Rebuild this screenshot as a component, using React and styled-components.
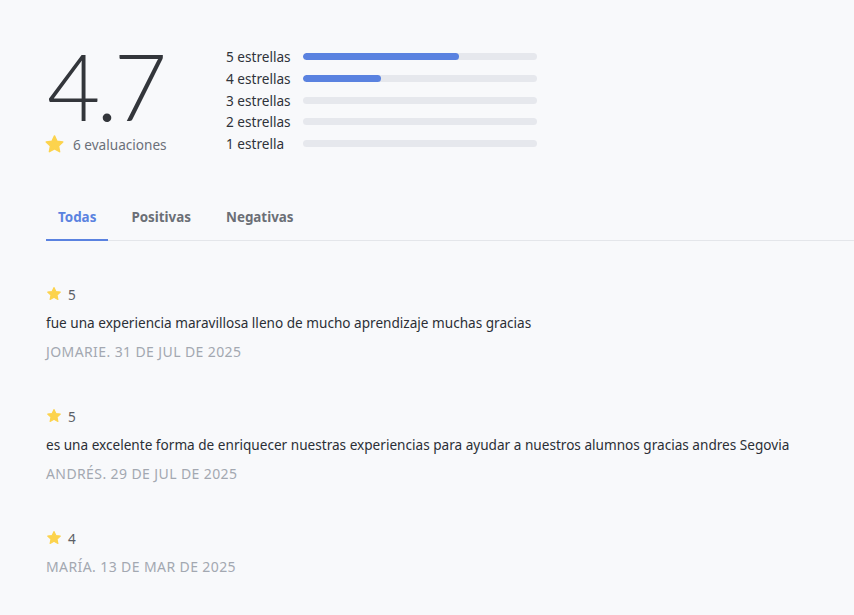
import styled, { createGlobalStyle } from "styled-components";
import { useState } from "react";

const GlobalStyle = createGlobalStyle`
body {
  margin: 0;
  background: #f8f9fb;
  font-family: 'Noto Sans', 'Lato', sans-serif;
  color: #2b2f36;
}
* { box-sizing: border-box; }
`

const distribucion = [
  { label: "5 estrellas", valor: 4 },
  { label: "4 estrellas", valor: 2 },
  { label: "3 estrellas", valor: 0 },
  { label: "2 estrellas", valor: 0 },
  { label: "1 estrella", valor: 0 },
]

const resenas = [
  { nota: 5, texto: "fue una experiencia maravillosa lleno de mucho aprendizaje muchas gracias", autor: "JOMARIE. 31 DE JUL DE 2025" },
  { nota: 5, texto: "es una excelente forma de enriquecer nuestras experiencias para ayudar a nuestros alumnos gracias andres Segovia", autor: "ANDRÉS. 29 DE JUL DE 2025" },
  { nota: 4, texto: "", autor: "MARÍA. 13 DE MAR DE 2025" },
]

function Estrella({ size }) {
  return (
    <svg width={size} height={size} viewBox="0 0 24 24" style={{ flexShrink: 0 }}>
      <path
        d="M12 2.2l2.9 6.1 6.6.8-4.9 4.6 1.3 6.6L12 17l-5.9 3.3 1.3-6.6-4.9-4.6 6.6-.8z"
        fill="#fcd34d"
        stroke="#fcd34d"
        strokeWidth="1.6"
        strokeLinejoin="round"
      />
    </svg>
  )
}

export default function App() {
  const [tab, setTab] = useState("Todas")
  const total = 6

  return (
    <Pagina>
      <GlobalStyle />
      <Resumen>
        <Promedio>
          <Numero>4.7</Numero>
          <Conteo>
            <Estrella size={21} />
            <span>6 evaluaciones</span>
          </Conteo>
        </Promedio>
        <Barras>
          {distribucion.map((d) => (
            <Fila key={d.label}>
              <Etiqueta>{d.label}</Etiqueta>
              <Pista>
                <Relleno style={{ width: `${(d.valor / total) * 100}%` }} />
              </Pista>
            </Fila>
          ))}
        </Barras>
      </Resumen>

      <Tabs>
        {["Todas", "Positivas", "Negativas"].map((t) => (
          <Tab key={t} $activo={tab === t} onClick={() => setTab(t)}>{t}</Tab>
        ))}
      </Tabs>

      <Lista>
        {resenas.map((r, i) => (
          <Resena key={i}>
            <Nota>
              <Estrella size={16} />
              <span>{r.nota}</span>
            </Nota>
            {r.texto && <Texto>{r.texto}</Texto>}
            <Autor>{r.autor}</Autor>
          </Resena>
        ))}
      </Lista>
    </Pagina>
  )
}

const Pagina = styled.div`
width: 100%;
min-height: 615px;
padding: 38px 0 0 46px;
`

const Resumen = styled.div`
display: flex;
align-items: flex-start;
`

const Promedio = styled.div`
width: 180px;
display: flex;
flex-direction: column;
`

const Numero = styled.div`
font-family: 'Lato', sans-serif;
font-size: 92px;
font-weight: 300;
line-height: 96px;
color: #33363b;
margin-left: 1px;
letter-spacing: -4px;
`

const Conteo = styled.div`
display: flex;
align-items: center;
gap: 8px;
margin-left: -2px;
font-size: 13.6px;
color: #6b7079;
`

const Barras = styled.div`
display: flex;
flex-direction: column;
margin-top: 8px;
`

const Fila = styled.div`
display: flex;
align-items: center;
height: 21.7px;
`

const Etiqueta = styled.span`
width: 77px;
font-size: 13.6px;
color: #2f333a;
`

const Pista = styled.div`
width: 234px;
height: 7px;
border-radius: 4px;
background: #e6e8ed;
overflow: hidden;
`

const Relleno = styled.div`
height: 100%;
border-radius: 4px;
background: #5a82e0;
`

const Tabs = styled.div`
display: flex;
gap: 11px;
margin-top: 42px;
border-bottom: 1px solid #e4e6ea;
`

const Tab = styled.div`
padding: 10px 12px 12px;
font-size: 13.4px;
font-weight: 700;
line-height: 20px;
cursor: pointer;
color: ${(p) => (p.$activo ? "#5a82e0" : "#6b6f76")};
border-bottom: 2px solid ${(p) => (p.$activo ? "#5a82e0" : "transparent")};
margin-bottom: -1px;
`

const Lista = styled.div`
display: flex;
flex-direction: column;
gap: 44px;
padding-top: 43px;
`

const Resena = styled.div`
display: flex;
flex-direction: column;
gap: 9px;
`

const Nota = styled.div`
display: flex;
align-items: center;
gap: 6px;
height: 20px;
font-size: 13.6px;
color: #5b5f66;
`

const Texto = styled.p`
margin: 0;
font-size: 13.6px;
line-height: 20px;
color: #2b2f36;
`

const Autor = styled.p`
margin: 0;
font-size: 14px;
line-height: 20px;
letter-spacing: 0.4px;
color: #a3a8b1;
`
